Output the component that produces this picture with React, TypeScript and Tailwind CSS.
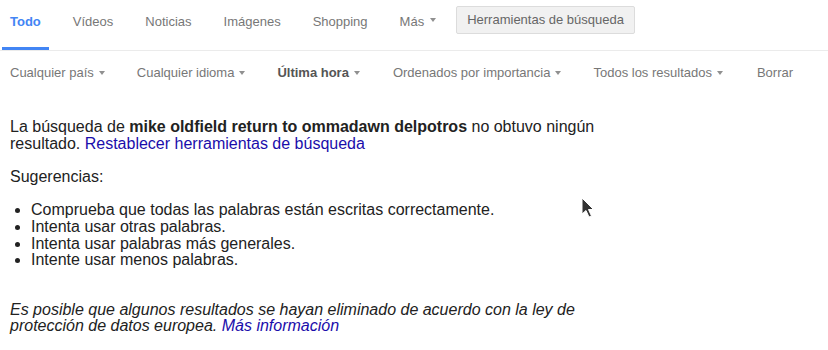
import React from "react";

const tabs = ["Todo", "Vídeos", "Noticias", "Imágenes", "Shopping"];

const Caret = ({ className = "" }: { className?: string }) => (
  <span
    className={
      "inline-block w-0 h-0 border-l-[3.5px] border-r-[3.5px] border-t-[4px] border-l-transparent border-r-transparent border-t-[#909090] " +
      className
    }
  />
);

const filters = [
  { label: "Cualquier país", caret: true, gap: "mr-[32px]" },
  { label: "Cualquier idioma", caret: true, gap: "mr-[32px]" },
  { label: "Última hora", caret: true, bold: true, gap: "mr-[33px]" },
  { label: "Ordenados por importancia", caret: true, gap: "mr-[32px]" },
  { label: "Todos los resultados", caret: true, gap: "mr-[34px]" },
  { label: "Borrar", caret: false, gap: "" },
];

const App = () => {
  return (
    <div
      className="relative w-[828px] h-[350px] bg-white overflow-hidden"
      style={{ fontFamily: '"Liberation Sans", Arial, sans-serif' }}
    >
      {/* tabs */}
      <div className="flex items-start h-[51px] pl-[2px] border-b border-[#ebebeb] text-[13px]">
        {tabs.map((t, i) => (
          <div
            key={t}
            className={
              i === 0
                ? "h-full pt-[12px] px-2 mr-4 font-bold text-[#4285f4] border-b-[3px] border-[#4285f4]"
                : "h-full pt-[12px] px-2 mr-4 text-[#777]"
            }
          >
            {t}
          </div>
        ))}
        <div className="h-full pt-[12px] px-2 text-[#777] flex items-start">
          Más
          <Caret className="ml-[6px] mt-[6px]" />
        </div>
        <button className="ml-[12px] mt-[6px] h-[28px] px-[10px] bg-[#f1f1f1] border border-[#dcdcdc] rounded-[2px] text-[#666] text-[13px]">
          Herramientas de búsqueda
        </button>
      </div>

      {/* filter row */}
      <div className="flex items-center h-[43px] pl-[10px] text-[13px] text-[#777]">
        {filters.map((f) => (
          <div
            key={f.label}
            className={"flex items-center " + f.gap + (f.bold ? " font-bold text-[#555]" : "")}
          >
            {f.label}
            {f.caret && <Caret className="ml-[5px]" />}
          </div>
        ))}
      </div>

      {/* results */}
      <div className="w-[600px] pl-[10px] pt-[25px] text-[16px] leading-[16.7px] text-[#222]">
        <p>
          La búsqueda de <b>mike oldfield return to ommadawn delpotros</b> no obtuvo ningún
          resultado.{" "}
          <a href="#" className="text-[#1a0dab]">
            Restablecer herramientas de búsqueda
          </a>
        </p>
        <p className="mt-[16.7px]">Sugerencias:</p>
        <ul className="mt-[16.5px] list-disc pl-[21px]">
          <li>Comprueba que todas las palabras están escritas correctamente.</li>
          <li>Intenta usar otras palabras.</li>
          <li>Intenta usar palabras más generales.</li>
          <li>Intente usar menos palabras.</li>
        </ul>
        <p className="mt-[32.5px] italic">
          Es posible que algunos resultados se hayan eliminado de acuerdo con la ley de
          protección de datos europea.{" "}
          <a href="#" className="text-[#1a0dab]">
            Más información
          </a>
        </p>
      </div>

      {/* mouse cursor */}
      <svg
        className="absolute left-[581px] top-[197px]"
        width="14"
        height="22"
        viewBox="0 0 14 22"
      >
        <path
          d="M1 1 L1 17 L5 13.5 L8 20 L10.5 19 L7.5 12.5 L12.5 12.5 Z"
          fill="#333"
          stroke="#fff"
          strokeWidth="1"
        />
      </svg>
    </div>
  );
};

export default App;
